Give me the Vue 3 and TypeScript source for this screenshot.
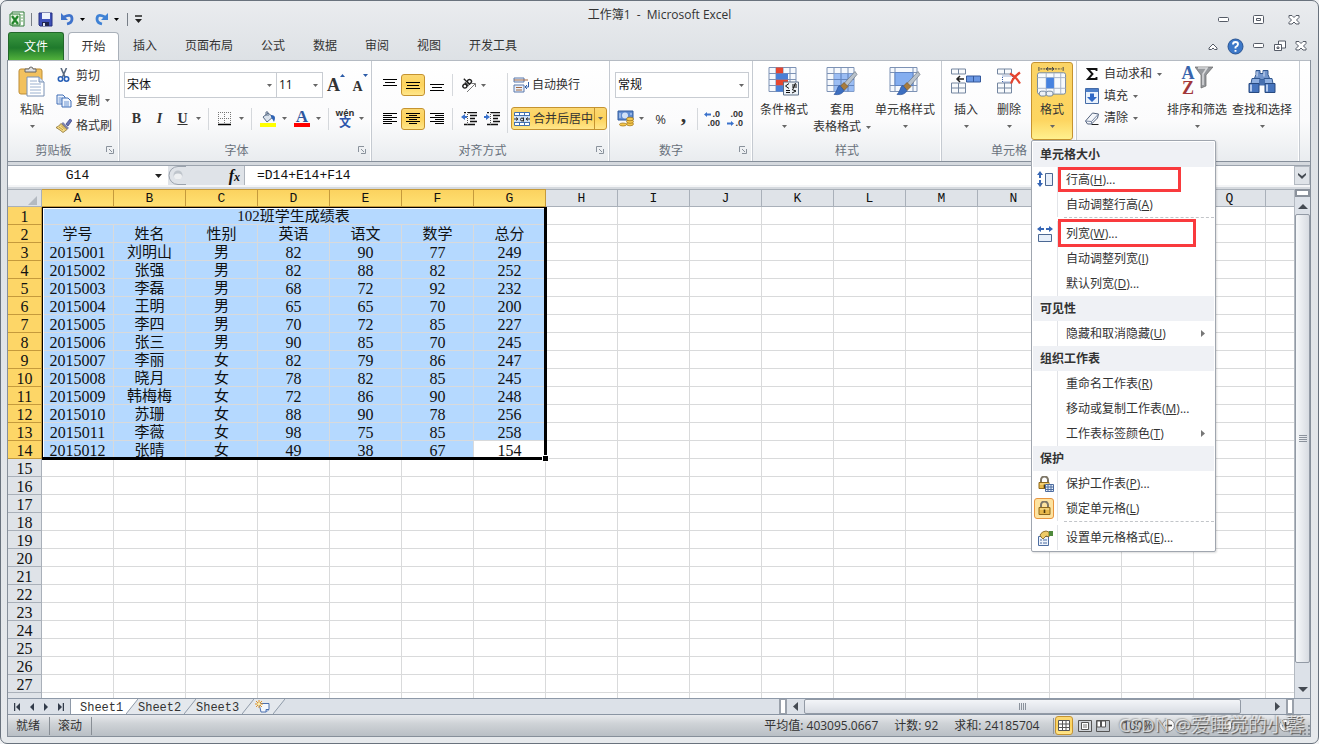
<script setup lang="ts">
import { h, type FunctionalComponent } from 'vue'

type Glyph = [width: number, height: number, body: string]

const sheetGrid = '<path d="M1 1h27v24h-27z" fill="#f6f9fd" stroke="#7d92b5"/><path d="M1 7h27M1 13h27M1 19h27M8 1v24M15 1v24M22 1v24" stroke="#7d92b5"/>'
const brush = '<path d="M29 5l-12 13 3 3 11-13z" fill="#b9c2cb" stroke="#6c7681" stroke-width=".7"/><path d="M18 16l4 4-4 4-4-4z" fill="#a87c3e" stroke="#74501c" stroke-width=".6"/><path d="M14 19q-2 0-3 4-1 3-3 5 8 1 10-4z" fill="#3d6fc0" stroke="#294f94" stroke-width=".6"/>'
const lock = '<path d="M4 7V4a3.5 3.5 0 0 1 7 0v3" fill="none" stroke="#7e7768" stroke-width="2"/><path d="M2 6.500h11v7h-11z" fill="#e8b94b" stroke="#8e681d"/><path d="M3 8h9" stroke="#fce7a4"/><path d="M7.500 8.500v3.500" stroke="#4d3910" stroke-width="1.600"/>'

const glyphs: Record<string, Glyph> = {
  excel: [16, 16, '<path d="M3 1h12v14H3z" fill="#fff" stroke="#2f7d36"/><path d="M1 3h10v11H1z" fill="#e1f1dc" stroke="#2f7d36"/><path d="M3 5l6 8M9 5l-6 8" stroke="#23862b" stroke-width="2.200"/><path d="M12 4h2M12 7h2M12 10h2" stroke="#70ad6a"/>'],
  save: [15, 15, '<path d="M1 1h13v13H2l-1-1z" fill="#3f51b8" stroke="#26317f"/><path d="M4 1h8v6H4z" fill="#eef2fb"/><path d="M4 10h7v4H4z" fill="#20264f"/><path d="M5 11h2v3H5z" fill="#dfe5f2"/>'],
  undo: [15, 14, '<path d="M4 5q8-4 8 2 0 4-5 5" fill="none" stroke="#3f73cb" stroke-width="2.800"/><path d="M1 1v7h7z" fill="#3f73cb"/>'],
  redo: [15, 14, '<path d="M11 5q-8-4-8 2 0 4 5 5" fill="none" stroke="#3f82d5" stroke-width="2.800"/><path d="M14 1v7H7z" fill="#3f82d5"/>'],
  qatMore: [9, 9, '<path d="M1 1h7" stroke="#222" stroke-width="1.400"/><path d="M1 4h7l-3.500 4z" fill="#222"/>'],
  arrow: [7, 4, '<path d="M0 0h7L3.500 4z" fill="#222"/>'],
  drop: [5, 3, '<path d="M0 0h5L2.500 3z" fill="#666"/>'],
  min: [12, 6, '<rect x=".5" y=".5" width="10" height="4" rx="1" fill="#fff" stroke="#555b66"/>'],
  max: [12, 10, '<rect x=".5" y=".5" width="10" height="8" rx="1" fill="#fff" stroke="#555b66"/><path d="M3.500 3.500h4v2h-4z" fill="none" stroke="#555b66"/>'],
  close: [12, 10, '<path d="M1 .5h3l2 2 2-2h3v2L8.500 5 11 7.500v1.500H8l-2-2-2 2H1V7.500L3.500 5 1 2.500z" fill="#fff" stroke="#555b66"/>'],
  restore: [12, 12, '<path d="M4.500 1h7v7h-7z" fill="#fff" stroke="#555b66"/><path d="M.5 4.500h7v6h-7z" fill="#fff" stroke="#555b66"/><path d="M3 7h2v1.500H3z" fill="none" stroke="#555b66"/>'],
  chevron: [10, 7, '<path d="M1 5l4-4 4 4v1.500H6.500L5 5 3.500 6.500H1z" fill="#fff" stroke="#555b66"/>'],
  help: [17, 17, '<circle cx="8.500" cy="8.500" r="7.500" fill="#3c78c8" stroke="#2a5593"/><path d="M6 6.500q0-2.500 2.500-2.500t2.500 2.200q0 1.500-2.500 3v1.300M8.500 12v1.700" fill="none" stroke="#fff" stroke-width="1.900"/>'],
  paste: [28, 31, '<rect x="1" y="3" width="23" height="25" rx="2" fill="#f2c15e" stroke="#bd8d36"/><path d="M7 6V3h4q0-2 2-2t2 2h3v3z" fill="#dedfe0" stroke="#666"/><path d="M9 11h12l5 5v14H9z" fill="#fff" stroke="#7890b4"/><path d="M21 11v5h5" fill="#d5e1f2" stroke="#7890b4"/><path d="M12 15h7M12 18h11M12 21h11M12 24h11M12 27h11" stroke="#9ab0cf"/>'],
  cut: [14, 15, '<path d="M4 0l4 9M9.500 0L5.500 9" stroke="#5b6b80" stroke-width="1.600"/><circle cx="3.500" cy="11" r="2.200" fill="none" stroke="#2860b7" stroke-width="1.600"/><circle cx="9.500" cy="11" r="2.200" fill="none" stroke="#2860b7" stroke-width="1.600"/>'],
  copy: [16, 14, '<path d="M1 1h6l2 2v7H1z" fill="#eef4fd" stroke="#3e6db5"/><path d="M2.500 4h4M2.500 6h4M2.500 8h3" stroke="#6c95d1"/><path d="M6 4h6l3 3v6H6z" fill="#eef4fd" stroke="#3e6db5"/><path d="M8 8h5M8 10h5M8 12h5" stroke="#6c95d1"/>'],
  painter: [16, 15, '<path d="M10 6l4-5 2 1.500-4 5.500z" fill="#6573b5" stroke="#3a417d" stroke-width=".7"/><path d="M7 4l6 6-2 1.500-6-5.500z" fill="#7d82ad"/><path d="M5 5.500l6 6-4 3q-2-2-7-5 3-1 5-4z" fill="#f3dc8a" stroke="#8c6d2b" stroke-width=".8"/><path d="M3 9l4 3M5 7.500l4 4" stroke="#c79b3b"/>'],
  up: [6, 4, '<path d="M0 3l2.500-3L5 3z" fill="#2b5ba8"/>'],
  down: [6, 4, '<path d="M0 0h5L2.500 3z" fill="#2b5ba8"/>'],
  borders: [14, 14, '<path d="M.5 0v12M6.500 0v12M12.500 0v12M0 .5h13M0 6.500h13" stroke="#777" stroke-dasharray="1 1"/><path d="M0 12.500h13" stroke="#000" stroke-width="1.600"/>'],
  fill: [16, 16, '<path d="M3 6l5-4 5 4-6 5z" fill="#dbe3ed" stroke="#596c87"/><path d="M6 5V1q2-1 2 1v3" fill="none" stroke="#596c87"/><path d="M11 4q6 0 3 7-1-2-3-5z" fill="#2f63b4"/><path d="M0 12h16v4H0z" fill="#ff0"/>'],
  fontColorBar: [16, 4, '<path d="M0 0h16v4H0z" fill="#f00"/>'],
  alMid: [14, 8, '<path d="M0 1.500h14M1 4.500h12M0 7.500h14" stroke="#000"/>'],
  alTop: [14, 8, '<path d="M0 .5h14M2 3.500h10M0 6.500h14" stroke="#000"/>'],
  left: [14, 12, '<path d="M0 .5h14M0 2.500h9M0 4.500h14M0 6.500h9M0 8.500h14M0 10.500h9" stroke="#000"/>'],
  center: [14, 12, '<path d="M0 .5h14M3 2.500h8M0 4.500h14M3 6.500h8M0 8.500h14M3 10.500h8" stroke="#000"/>'],
  right: [14, 12, '<path d="M0 .5h14M5 2.500h9M0 4.500h14M5 6.500h9M0 8.500h14M5 10.500h9" stroke="#000"/>'],
  orient: [16, 16, '<path d="M6 15l8-8M10.500 6.500H14.500V10" fill="none" stroke="#777"/><g fill="none" stroke="#222" stroke-width="1.400" transform="rotate(-45 6 7)"><circle cx="3" cy="7" r="2"/><path d="M5.500 4.500v5M7.500 1v8.500"/><circle cx="9.500" cy="7" r="2"/></g>'],
  outdent: [16, 14, '<path d="M7 .5h9M9 3.500h7M9 6.500h5M9 9.500h7M3 12.500h11M3 .5h2" stroke="#111" stroke-width="1.400"/><path d="M6.500 0v14" stroke="#555" stroke-dasharray="1 1"/><path d="M4 2L0 5l4 3V6h2V4H4z" fill="#3a72cc"/>'],
  indent: [16, 14, '<path d="M7 .5h9M9 3.500h7M9 6.500h5M9 9.500h7M3 12.500h11M3 .5h2" stroke="#111" stroke-width="1.400"/><path d="M6.500 0v14" stroke="#555" stroke-dasharray="1 1"/><path d="M2 2l4 3-4 3V6H0V4h2z" fill="#3a72cc"/>'],
  wrap: [17, 16, '<path d="M1 1h10v4H1zM1 8h10v7H1z" fill="#e9f0fa" stroke="#5a79ab"/><path d="M1 3h14M3 10.500h6M3 13h6" stroke="#a3673f"/><path d="M15.500 5v5h-3M14 8l-2 2 2 2" fill="none" stroke="#2e5da6"/>'],
  merge: [16, 14, '<path d="M.5.5h15v13H.5z" fill="#fff" stroke="#4270b0"/><path d="M0 3.500h16M0 10.500h16M5.500 0v3M10.500 0v3M5.500 11v3M10.500 11v3" stroke="#4270b0"/><path d="M0 4h16v6H0z" fill="#cfe0f6"/><path d="M0 7h4M12 7h4M2 5.500l2 1.500-2 1.500M14 5.500L12 7l2 1.500" fill="none" stroke="#333"/><circle cx="8" cy="7.500" r="1.500" fill="none" stroke="#222"/><path d="M9.500 5.500v4" stroke="#222"/>'],
  money: [18, 17, '<path d="M1 1h15v9H1z" fill="#5f8bd0" stroke="#315a9c"/><circle cx="8" cy="5.500" r="3" fill="#cfe0f7"/><path d="M3 3v5M14 3v2" stroke="#cfe0f7"/><g fill="#f5c84d" stroke="#9c7015" stroke-width=".7"><ellipse cx="13" cy="14" rx="3.500" ry="1.800"/><ellipse cx="13" cy="11.500" rx="3.500" ry="1.800"/><ellipse cx="13" cy="9" rx="3.500" ry="1.800"/><ellipse cx="6" cy="14.500" rx="3.500" ry="1.500"/></g>'],
  blueLeft: [7, 5, '<path d="M3 0L0 2.500 3 5V3.500h4v-2H3z" fill="#3a72cc"/>'],
  blueRight: [7, 5, '<path d="M4 0l3 2.500L4 5V3.500H0v-2h4z" fill="#3a72cc"/>'],
  launcher: [8, 8, '<path d="M.5 6V.5H6" fill="none" stroke="#8a929c"/><path d="M3 3l3 3M7.500 3v4.500H3" fill="none" stroke="#8a929c"/>'],
  cond: [32, 30, sheetGrid + '<path d="M8 1h7v6H8zM8 13h12v6H8z" fill="#e5452f"/><path d="M8 7h12v6H8zM8 19h7v6H8z" fill="#4a7fd6"/><path d="M15.500 15.500h15v13h-15z" fill="#eef3f8" stroke="#5d6f87"/><path d="M21 17l-3.500 2.500 3.500 2.500M18 24h4M18 26h4M24 18.500h5M24 20.500h5M27.500 16.500l-2.500 6M24 23l4 1.500-4 2" fill="none" stroke="#111"/>'],
  tableStyle: [32, 30, sheetGrid + '<path d="M8 7h20v18H8z" fill="#84aef0" opacity=".8"/><path d="M8 13h20M8 19h20M15 7v18M22 7v18" stroke="#6486c0"/>' + brush],
  cellStyle: [32, 30, '<path d="M1 1h27v24H1z" fill="#f6f9fd" stroke="#7d92b5"/><path d="M1 6h27M1 19h27M6 1v24M24 1v24" stroke="#7d92b5"/><path d="M6 6h18v13H6z" fill="#84aef0" stroke="#5f84c4"/>' + brush],
  insert: [32, 28, '<path d="M1.500 1.500h14v5h-14zM1.500 15.500h14v10h-14zM8.500 1.500v5M8.500 15.500v10M1.500 20.500h14" fill="#f8fafc" stroke="#7486a0"/><path d="M16.500 8.500h14v6h-14zM23.500 8.500v6" fill="#6a97e3" stroke="#34599c"/><path d="M14 11.500H7M10 8.500l-3 3 3 3" fill="none" stroke="#222" stroke-width="1.500"/>'],
  remove: [26, 28, '<path d="M1.500 1.500h14v5h-14zM1.500 15.500h14v10h-14zM8.500 1.500v5M8.500 15.500v10M1.500 20.500h14" fill="#f8fafc" stroke="#7486a0"/><path d="M6.500 8.500h10v6h-10z" fill="#fff" stroke="#3d62a8" stroke-dasharray="1 1"/><path d="M14 6q6 3 10 10M24 5q-7 5-9 11" fill="none" stroke="#e5452f" stroke-width="2.200"/>'],
  format: [32, 32, '<path d="M2.500 1v4M27.500 1v4" stroke="#444"/><path d="M4 3h22" stroke="#444" stroke-dasharray="2 1"/><path d="M10 3h8M12 1l-2 2 2 2M16 1l2 2-2 2" fill="none" stroke="#444"/><rect x="1" y="7" width="29" height="22" rx="2" fill="#f7fafd" stroke="#74879f"/><path d="M1 12h29M1 23h29M10 7v22M18 7v22M25 7v22" stroke="#a6b3c6"/><path d="M10 12h8v11h-8z" fill="#4682df"/><rect x="3" y="26" width="7" height="5" rx="2" fill="#eef2f7" stroke="#74879f"/><rect x="10" y="26" width="7" height="5" rx="2" fill="#eef2f7" stroke="#74879f"/>'],
  sigma: [11, 12, '<path d="M10 3V1H1.500L6 6l-4.500 5H10V9" fill="none" stroke="#111" stroke-width="1.900"/>'],
  fillDown: [14, 16, '<path d="M.5.5h13v15H.5z" fill="#eaf2fc" stroke="#456ca8"/><path d="M1 1h12v3H1z" fill="#4d7fc9"/><path d="M5 5.500h4V9h3l-5 5-5-5h3z" fill="#2f68c6"/>'],
  eraser: [15, 13, '<path d="M1 9l7-8 6 1-1 4-6 6H3z" fill="#f4f6fa" stroke="#52617b"/><path d="M1 9l6 .500 6.500-7M7 9.500V12" fill="none" stroke="#7888a3"/><path d="M7 12.500h7" stroke="#222"/>'],
  funnel: [18, 23, '<path d="M0 1h18L11 9v11l-5 2V9z" fill="#96999d" stroke="#666" stroke-width=".7"/><path d="M3 2h9L8 8v11" fill="none" stroke="#d9dadc" stroke-width="1.500"/>'],
  binocular: [28, 26, '<path d="M8 2h4v3h3V2h5v4l2 5H6l2-5z" fill="#7295cb" stroke="#31578f"/><path d="M4 10h8v5H3zM16 10h8l1 5h-9z" fill="#8eafe0" stroke="#31578f"/><path d="M11 11h6v6h-6z" fill="#4770b0"/><path d="M1 15h10v9H1zM17 15h10v9H17z" fill="#4674bd" stroke="#284a80"/><path d="M3 16v7M19 16v7" stroke="#b6cbed" stroke-width="2"/><path d="M9 3v5M16 3v5" stroke="#d4e1f5"/>'],
  rowHeight: [17, 17, '<path d="M3 0l3 4H4v3H2V4H0zM3 16l3-4H4V9H2v3H0z" fill="#3666b5"/><path d="M8.500 2.500h7v12h-7z" fill="#e7effa" stroke="#4b6893"/>'],
  colWidth: [16, 16, '<path d="M0 3l4-3v2h3v2H4v2zM16 3l-4-3v2H9v2h3v2z" fill="#3666b5"/><path d="M1.500 8.500h13v7h-13z" fill="#e7effa" stroke="#4b6893"/>'],
  protect: [17, 16, lock.replace('M2 6.500h11v7h-11z', 'M2 6.500h10v6h-10z') + '<path d="M8.500 8.500h8v7h-8z" fill="#e9f0fa" stroke="#4d6da0"/><path d="M8 11h9M8 13.500h9M11 8v8M14 8v8" stroke="#4d6da0"/>'],
  lock: [16, 15, lock],
  props: [17, 16, '<path d="M1.500 6.500h10v9h-10z" fill="#eef3fb" stroke="#4d6da0"/><path d="M3 10h2M6 10h4M3 13h2M6 13h4" stroke="#4d6da0"/><path d="M3 5q2-4 6-4l3 1v5L9 6 6 9 4 7z" fill="#eecb67" stroke="#7a5a1a" stroke-width=".8"/><path d="M12 1h4v5h-4z" fill="#4f8a3c"/>'],
  sub: [4, 7, '<path d="M0 0l4 3.500L0 7z" fill="#777"/>'],
  knob: [18, 19, '<path d="M18 .5h-8a9 9 0 0 0 0 18h8" fill="#dfe3e8" stroke="#9ba3ad"/><circle cx="10" cy="9" r="4.500" fill="#bfc5cc"/><ellipse cx="10" cy="10.500" rx="4" ry="3" fill="#eef0f2"/>'],
  corner: [9, 9, '<path d="M9 0v9H0z" fill="#b4bac1"/>'],
  scrollUp: [10, 5, '<path d="M5 0l5 5H0z" fill="#444a52"/>'],
  scrollDown: [10, 5, '<path d="M5 5l5-5H0z" fill="#444a52"/>'],
  scrollLeft: [5, 9, '<path d="M0 4.500L5 0v9z" fill="#444a52"/>'],
  scrollRight: [5, 9, '<path d="M5 4.500L0 0v9z" fill="#444a52"/>'],
  expand: [8, 6, '<path d="M0 0l4 3 4-3v2L4 6 0 2z" fill="#444a52"/>'],
  first: [7, 8, '<path d="M.5 0v8" stroke="#333c4a" stroke-width="1.500"/><path d="M2 4l4-4v8z" fill="#333c4a"/>'],
  prev: [5, 8, '<path d="M0 4l4-4v8z" fill="#333c4a"/>'],
  next: [5, 8, '<path d="M5 4L1 0v8z" fill="#333c4a"/>'],
  last: [7, 8, '<path d="M6.500 0v8" stroke="#333c4a" stroke-width="1.500"/><path d="M5 4L1 0v8z" fill="#333c4a"/>'],
  newSheet: [16, 13, '<path d="M4 3.500h10v6l-3 2.500H6z" fill="#f3f7fd" stroke="#4b6fae"/><path d="M14 9.500h-3V12" fill="#b4caee" stroke="#4b6fae"/><path d="M4 0v8M0 4h8M1 1l6 6M7 1L1 7" stroke="#df9226"/><circle cx="4" cy="4" r="1.500" fill="#fff1a8"/>'],
  vNormal: [12, 11, '<path d="M.5.5h11v10H.5zM0 4h12M0 7.500h12M4.500 0v11M8 0v11" fill="#fff" stroke="#555"/>'],
  vLayout: [14, 12, '<path d="M.5.5h13v11H.5z" fill="#d2d6da" stroke="#555"/><path d="M3.500 2.500h7v7h-7z" fill="#fff" stroke="#555"/><path d="M5 5h4M5 7h4" stroke="#777"/>'],
  vBreak: [14, 12, '<path d="M.5.5h13v11H.5z" fill="#c2c7cc" stroke="#555"/><path d="M1 1h3.500v6H1zM5.500 1h4v6h-4z" fill="#fff" stroke="#555"/>'],
  minus: [13, 13, '<circle cx="6.500" cy="6.500" r="6" fill="#fafafa" stroke="#888"/><path d="M3 6.500h7" stroke="#444" stroke-width="1.600"/>'],
  plus: [13, 13, '<circle cx="6.500" cy="6.500" r="6" fill="#fafafa" stroke="#888"/><path d="M3 6.500h7M6.500 3v7" stroke="#444" stroke-width="1.600"/>'],
  grip: [10, 10, '<path d="M8 0h2v2H8zM4 4h2v2H4zM8 4h2v2H8zM0 8h2v2H0zM4 8h2v2H4zM8 8h2v2H8z" fill="#8b929a"/>'],
}

const Icon: FunctionalComponent<{ name: string }> = ({ name }) => {
  const [width, height, body] = glyphs[name]
  return h('svg', { width, height, viewBox: `0 0 ${width} ${height}`, innerHTML: body, 'aria-hidden': 'true' })
}
Icon.props = ['name']

const tabs = ['插入', '页面布局', '公式', '数据', '审阅', '视图', '开发工具']
const columns = [...'ABCDEFGHIJKLMNOPQR']
const rowCount = 28
const records: string[][] = [
  ['学号', '姓名', '性别', '英语', '语文', '数学', '总分'],
  ['2015001', '刘明山', '男', '82', '90', '77', '249'],
  ['2015002', '张强', '男', '82', '88', '82', '252'],
  ['2015003', '李磊', '男', '68', '72', '92', '232'],
  ['2015004', '王明', '男', '65', '65', '70', '200'],
  ['2015005', '李四', '男', '70', '72', '85', '227'],
  ['2015006', '张三', '男', '90', '85', '70', '245'],
  ['2015007', '李丽', '女', '82', '79', '86', '247'],
  ['2015008', '晓月', '女', '78', '82', '85', '245'],
  ['2015009', '韩梅梅', '女', '72', '86', '90', '248'],
  ['2015010', '苏珊', '女', '88', '90', '78', '256'],
  ['2015011', '李薇', '女', '98', '75', '85', '258'],
  ['2015012', '张晴', '女', '49', '38', '67', '154'],
]
const cell = (row: number, col: number) => records[row - 2]?.[col] ?? ''
const isNumber = (value: string) => /^\d+$/.test(value)

interface Entry {
  kind: 'head' | 'item' | 'line'
  text?: string
  key?: string
  tail?: string
  icon?: string
  sub?: boolean
  mark?: string
  on?: boolean
}
const menu: Entry[] = [
  { kind: 'head', text: '单元格大小' },
  { kind: 'item', text: '行高', key: 'H', tail: '...', icon: 'rowHeight', mark: 'mark-row' },
  { kind: 'item', text: '自动调整行高', key: 'A' },
  { kind: 'line' },
  { kind: 'item', text: '列宽', key: 'W', tail: '...', icon: 'colWidth', mark: 'mark-col' },
  { kind: 'item', text: '自动调整列宽', key: 'I' },
  { kind: 'item', text: '默认列宽', key: 'D', tail: '...' },
  { kind: 'head', text: '可见性' },
  { kind: 'item', text: '隐藏和取消隐藏', key: 'U', sub: true },
  { kind: 'head', text: '组织工作表' },
  { kind: 'item', text: '重命名工作表', key: 'R' },
  { kind: 'item', text: '移动或复制工作表', key: 'M', tail: '...' },
  { kind: 'item', text: '工作表标签颜色', key: 'T', sub: true },
  { kind: 'head', text: '保护' },
  { kind: 'item', text: '保护工作表', key: 'P', tail: '...', icon: 'protect' },
  { kind: 'item', text: '锁定单元格', key: 'L', icon: 'lock', on: true },
  { kind: 'line' },
  { kind: 'item', text: '设置单元格格式', key: 'E', tail: '...', icon: 'props' },
]
</script>

<template>
  <div class="window">
    <header class="titlebar">
      <div class="quick">
        <Icon name="excel" /><i class="bar"></i>
        <button aria-label="保存"><Icon name="save" /></button>
        <button class="pair" aria-label="撤消"><Icon name="undo" /><Icon name="drop" class="dark" /></button>
        <button class="pair" aria-label="恢复"><Icon name="redo" /><Icon name="drop" class="dark" /></button>
        <i class="bar last"></i>
        <button aria-label="自定义快速访问工具栏"><Icon name="qatMore" /></button>
      </div>
      <h1>工作簿1&nbsp; -&nbsp; Microsoft Excel</h1>
      <div class="controls">
        <button aria-label="最小化"><Icon name="min" /></button>
        <button aria-label="最大化"><Icon name="max" /></button>
        <button aria-label="关闭"><Icon name="close" /></button>
      </div>
    </header>

    <nav class="tabs">
      <button class="file">文件</button>
      <button class="current">开始</button>
      <button v-for="t in tabs" :key="t" class="tab">{{ t }}</button>
      <div class="book">
        <button aria-label="功能区最小化"><Icon name="chevron" /></button>
        <button aria-label="帮助"><Icon name="help" /></button>
        <button aria-label="最小化工作簿"><Icon name="min" /></button>
        <button aria-label="还原工作簿"><Icon name="restore" /></button>
        <button aria-label="关闭工作簿"><Icon name="close" /></button>
      </div>
    </nav>

    <main class="body">
      <section class="ribbon">
        <div class="group g-clip">
          <div class="tools">
            <button class="big w-paste"><Icon name="paste" class="pic" /><span>粘贴</span><Icon name="drop" class="under" /></button>
            <div class="stack">
              <button class="small"><Icon name="cut" class="ico" />剪切</button>
              <button class="small"><Icon name="copy" class="ico" />复制<Icon name="drop" /></button>
              <button class="small"><Icon name="painter" class="ico" />格式刷</button>
            </div>
          </div>
          <footer>剪贴板<Icon name="launcher" class="launch" /></footer>
        </div>

        <div class="group g-font">
          <div class="rows">
            <div class="row">
              <label class="combo c-font"><select aria-label="字体"><option>宋体</option></select><Icon name="drop" /></label>
              <label class="combo c-size"><select aria-label="字号"><option>11</option></select><Icon name="drop" /></label>
              <button class="tool grow" aria-label="增大字号"><b class="serif">A</b><Icon name="up" /></button>
              <button class="tool grow shrink" aria-label="减小字号"><b class="serif">A</b><Icon name="down" /></button>
            </div>
            <div class="row">
              <button class="tool serif"><b>B</b></button>
              <button class="tool serif"><b><i>I</i></b></button>
              <button class="tool serif"><b><u>U</u></b></button>
              <button class="arrow" aria-label="下划线"><Icon name="drop" /></button><i class="sep"></i>
              <button class="tool" aria-label="边框"><Icon name="borders" /></button>
              <button class="arrow" aria-label="边框选项"><Icon name="drop" /></button><i class="sep"></i>
              <button class="tool" aria-label="填充颜色"><Icon name="fill" /></button>
              <button class="arrow" aria-label="填充颜色选项"><Icon name="drop" /></button>
              <button class="tool color" aria-label="字体颜色"><b class="serif">A</b><Icon name="fontColorBar" /></button>
              <button class="arrow" aria-label="字体颜色选项"><Icon name="drop" /></button><i class="sep"></i>
              <button class="tool pinyin"><span>wén</span><span class="wen">文</span></button>
              <button class="arrow" aria-label="拼音选项"><Icon name="drop" /></button>
            </div>
          </div>
          <footer>字体<Icon name="launcher" class="launch" /></footer>
        </div>

        <div class="group g-align">
          <div class="split">
            <div class="rows">
              <div class="row">
                <button class="tool up3" aria-label="顶端对齐"><Icon name="alTop" /></button>
                <button class="tool on" aria-label="垂直居中"><Icon name="alMid" /></button>
                <button class="tool down3" aria-label="底端对齐"><Icon name="alTop" /></button><i class="sep"></i>
                <button class="tool" aria-label="方向"><Icon name="orient" /></button>
                <button class="arrow tight-arrow" aria-label="方向选项"><Icon name="drop" /></button>
              </div>
              <div class="row">
                <button class="tool" aria-label="左对齐"><Icon name="left" /></button>
                <button class="tool on" aria-label="居中"><Icon name="center" /></button>
                <button class="tool" aria-label="右对齐"><Icon name="right" /></button><i class="sep"></i>
                <button class="tool" aria-label="减少缩进"><Icon name="outdent" /></button>
                <button class="tool" aria-label="增加缩进"><Icon name="indent" /></button>
              </div>
            </div>
            <i class="sep tall"></i>
            <div class="rows merge-col">
              <div class="row"><button class="wrapper"><Icon name="wrap" />自动换行</button></div>
              <div class="row">
                <div class="merge"><button><Icon name="merge" />合并后居中</button><button class="more" aria-label="合并选项"><Icon name="drop" /></button></div>
              </div>
            </div>
          </div>
          <footer>对齐方式<Icon name="launcher" class="launch" /></footer>
        </div>

        <div class="group g-num">
          <div class="rows">
            <div class="row"><label class="combo c-num"><select aria-label="数字格式"><option>常规</option></select><Icon name="drop" /></label></div>
            <div class="row">
              <button class="tool" aria-label="会计数字格式"><Icon name="money" /></button>
              <button class="arrow" aria-label="会计格式选项"><Icon name="drop" /></button>
              <button class="tool pct">%</button>
              <button class="tool comma serif">,</button><i class="sep"></i>
              <button class="tool dec"><span><Icon name="blueLeft" />.0</span><span>.00</span></button>
              <button class="tool dec"><span>.00</span><span><Icon name="blueRight" />.0</span></button>
            </div>
          </div>
          <footer>数字<Icon name="launcher" class="launch" /></footer>
        </div>

        <div class="group g-style">
          <div class="tools">
            <button class="big w-cond"><Icon name="cond" class="pic" /><span>条件格式</span><Icon name="drop" class="under" /></button>
            <button class="big w-table"><Icon name="tableStyle" class="pic" /><span>套用</span><span class="second">表格格式<Icon name="drop" /></span></button>
            <button class="big w-cell"><Icon name="cellStyle" class="pic" /><span>单元格样式</span><Icon name="drop" class="under" /></button>
          </div>
          <footer>样式</footer>
        </div>

        <div class="group g-cells">
          <div class="tools">
            <button class="big w-ins"><Icon name="insert" class="pic" /><span>插入</span><Icon name="drop" class="under" /></button>
            <button class="big w-del"><Icon name="remove" class="pic" /><span>删除</span><Icon name="drop" class="under" /></button>
            <div class="anchor">
              <button class="big open"><Icon name="format" class="pic" /><span>格式</span><Icon name="drop" class="under" /></button>
              <div class="menu" role="menu">
                <template v-for="(m, i) in menu" :key="i">
                  <h2 v-if="m.kind === 'head'">{{ m.text }}</h2>
                  <hr v-else-if="m.kind === 'line'" />
                  <button v-else role="menuitem">
                    <span class="slot" :class="{ checked: m.on }"><Icon v-if="m.icon" :name="m.icon" /></span>
                    <span class="words">{{ m.text }}(<u>{{ m.key }}</u>){{ m.tail }}</span>
                    <Icon v-if="m.sub" name="sub" class="sub" />
                    <span v-if="m.mark" class="mark" :class="m.mark"></span>
                  </button>
                </template>
              </div>
            </div>
          </div>
          <footer>单元格</footer>
        </div>

        <div class="group g-edit">
          <div class="tools">
            <div class="stack tight">
              <button class="small"><Icon name="sigma" class="ico" />自动求和<Icon name="drop" /></button>
              <button class="small"><Icon name="fillDown" class="ico" />填充<Icon name="drop" /></button>
              <button class="small"><Icon name="eraser" class="ico" />清除<Icon name="drop" /></button>
            </div>
            <button class="big w-sort">
              <span class="pic az serif"><span><b class="a">A</b><b class="z">Z</b></span><Icon name="funnel" /></span>
              <span>排序和筛选</span><Icon name="drop" class="under" />
            </button>
            <button class="big w-find"><Icon name="binocular" class="pic" /><span>查找和选择</span><Icon name="drop" class="under" /></button>
          </div>
        </div>
      </section>

      <section class="formula">
        <div class="namebox"><input aria-label="名称框" value="G14" /><Icon name="arrow" /></div>
        <Icon name="knob" />
        <button class="fx" aria-label="插入函数"><b><i>f</i><small>x</small></b></button>
        <input class="expr" aria-label="编辑栏" value="=D14+E14+F14" />
        <button class="expand" aria-label="展开编辑栏"><Icon name="expand" /></button>
      </section>

      <section class="sheet">
        <div class="grid">
          <table>
            <colgroup><col class="c-head" /><col v-for="c in columns" :key="c" class="c-col" /></colgroup>
            <thead>
              <tr>
                <th class="all"><Icon name="corner" /></th>
                <th v-for="(c, i) in columns" :key="c" :class="{ hot: i < 7 }">{{ c }}</th>
              </tr>
            </thead>
            <tbody>
              <tr v-for="r in rowCount" :key="r">
                <th :class="{ hot: r < 15 }">{{ r < rowCount ? r : '' }}</th>
                <template v-if="r === 1">
                  <td colspan="7" class="sel">102班学生成绩表</td>
                  <td v-for="n in 11" :key="n"></td>
                </template>
                <template v-else>
                  <td v-for="(c, i) in columns" :key="c" :class="{ sel: r < 15 && i < 7, active: r === 14 && i === 6, num: isNumber(cell(r, i)) }">{{ cell(r, i) }}</td>
                </template>
              </tr>
            </tbody>
          </table>
          <div class="outline"><span></span></div>
        </div>
        <div class="vscroll">
          <i class="splitter"></i>
          <button aria-label="向上滚动"><Icon name="scrollUp" /></button>
          <div class="thumb"><i></i></div>
          <button class="end" aria-label="向下滚动"><Icon name="scrollDown" /></button>
        </div>
      </section>

      <section class="sheetbar">
        <div class="nav">
          <button aria-label="第一张"><Icon name="first" /></button>
          <button aria-label="上一张"><Icon name="prev" /></button>
          <button aria-label="下一张"><Icon name="next" /></button>
          <button aria-label="最后一张"><Icon name="last" /></button>
        </div>
        <button class="leaf front">Sheet1</button>
        <svg class="slash" width="12" height="15" aria-hidden="true"><path d="M0 0h12L0 15z" fill="#fff" /><path d="M12 0L0 15" stroke="#8e99a8" /></svg>
        <button class="leaf">Sheet2</button>
        <svg class="slash" width="12" height="15" aria-hidden="true"><path d="M12 0L0 15" stroke="#8e99a8" /></svg>
        <button class="leaf">Sheet3</button>
        <svg class="slash" width="12" height="15" aria-hidden="true"><path d="M12 0L0 15" stroke="#8e99a8" /></svg>
        <button class="leaf fresh" aria-label="插入工作表"><Icon name="newSheet" /></button>
        <svg width="12" height="15" aria-hidden="true"><path d="M0 0h12L0 15z" fill="#e4e8ed" /><path d="M12 0L0 15" stroke="#8e99a8" /></svg>
        <div class="hscroll">
          <i class="hsplit"></i>
          <button aria-label="向左滚动"><Icon name="scrollLeft" /></button>
          <div class="track"><div class="thumb"><i></i></div></div>
          <button aria-label="向右滚动"><Icon name="scrollRight" /></button>
          <i class="hsplit"></i>
        </div>
      </section>

      <footer class="status">
        <span class="state">就绪</span><span class="state">滚动</span>
        <div class="sums"><span>平均值: 403095.0667</span><span>计数: 92</span><span>求和: 24185704</span></div>
        <div class="views">
          <button class="on" aria-label="普通"><Icon name="vNormal" /></button>
          <button aria-label="页面布局视图"><Icon name="vLayout" /></button>
          <button aria-label="分页预览"><Icon name="vBreak" /></button>
        </div>
        <button class="zoom">100%</button>
        <button class="round" aria-label="缩小"><Icon name="minus" /></button>
        <input type="range" min="0" max="100" value="50" aria-label="显示比例" />
        <button class="round" aria-label="放大"><Icon name="plus" /></button>
        <Icon name="grip" class="grip" />
        <div class="credit">CSDN @爱睡觉的小馨</div>
      </footer>
    </main>
  </div>
</template>

<style>
body { margin: 0; background: #f2f3f5; }
</style>

<style scoped>
* { box-sizing: border-box; }
.window { height: 100vh; min-height: 600px; display: flex; flex-direction: column; border: 1px solid #69727d; border-radius: 7px; background: linear-gradient(#eaecef, #dde1e5 60px, #e6e9ec); padding: 0 7px 6px; overflow: hidden; font: 12px/16px "Open Sans", "Noto Sans CJK SC", sans-serif; color: #333; }
button { border: 0; padding: 0; margin: 0; background: none; font: inherit; color: inherit; display: flex; align-items: center; white-space: nowrap; }
svg { display: block; flex: none; }
input, select { font: inherit; color: inherit; margin: 0; }
.serif { font-family: "Liberation Serif", serif; }

.titlebar { height: 31px; flex: none; display: grid; grid-template-columns: 1fr auto 1fr; align-items: center; }
h1 { margin: 0; font-size: 12px; font-weight: 400; line-height: 28px; height: 31px; }
.quick { display: flex; align-items: center; gap: 6px; padding: 5px 0 0 1px; }
.quick .pair { gap: 5px; margin: 0 2px 0 1px; }
.dark { filter: brightness(0); }
.bar { width: 1px; height: 13px; background: #777e87; }
.controls { display: flex; justify-content: flex-end; align-items: center; gap: 23px; padding: 6px 11px 0 0; }

.tabs { height: 28px; flex: none; display: flex; align-items: stretch; }
.tabs .file { width: 56px; justify-content: center; color: #fff; border: 1px solid #22672a; border-bottom: 0; border-radius: 3px 3px 0 0; background: linear-gradient(#3d9a42, #1f7a2c 55%, #52b13c); }
.tabs .current { width: 51px; margin-left: 4px; justify-content: center; border: 1px solid #a9b0b9; border-bottom: 0; border-radius: 4px 4px 0 0; background: #fff; }
.tab { padding: 0 14px; }
.book { margin-left: auto; display: flex; align-items: center; gap: 9px; padding-right: 4px; }

.body { flex: 1; min-height: 0; display: flex; flex-direction: column; border: 1px solid #868f9a; border-width: 0 1px 1px 0; background: #d5d9de; box-shadow: -1px 0 #868f9a; position: relative; }
.ribbon { flex: none; display: flex; height: 102px; background: linear-gradient(#fff, #fbfbfc 60%, #e9ecef); border-top: 1px solid #b5bbc3; border-bottom: 1px solid #868f9a; }
.group { position: relative; display: flex; flex-direction: column; border-right: 1px solid #c5cad1; box-shadow: inset -1px 0 #fff; flex: none; }
.group > footer { margin-top: auto; height: 19px; text-align: center; color: #69717c; line-height: 18px; }
.launch { position: absolute; right: 5px; bottom: 7px; }
.g-clip { width: 112px; } .g-clip footer { padding-right: 20px; }
.g-font { width: 252px; } .g-font footer { padding-right: 18px; }
.g-align { width: 238px; } .g-align footer { padding-right: 16px; }
.g-num { width: 143px; } .g-num footer { padding-right: 20px; }
.g-style { width: 189px; }
.g-cells { width: 135px; }
.g-edit { width: 223px; }
.tools { display: flex; height: 80px; padding-top: 2px; }
.big { flex-direction: column; height: 78px; justify-content: flex-start; }
.big .pic { height: 31px; margin: 3px 0 4px; }
.big > span { line-height: 18px; }
.big .under { margin-top: 6px; }
.big .second { display: flex; align-items: center; gap: 5px; line-height: 16px; }
.w-paste { width: 48px; }
.w-cond { width: 62px; } .w-table { width: 54px; } .w-cell { width: 72px; }
.w-ins { width: 48px; } .w-del { width: 38px; }
.w-sort { width: 64px; margin-left: 2px; } .w-find { width: 66px; }
.stack { display: flex; flex-direction: column; }
.small { height: 25px; gap: 5px; }
.small .ico { width: 16px; margin-right: -1px; }
.tight { width: 86px; padding: 0 0 0 7px; }
.tight .small { height: 22px; }
.az { display: flex; }
.az > span { display: flex; flex-direction: column; }
.az b { font-size: 18px; line-height: 15px; }
.az .a { color: #3865ad; } .az .z { color: #a2383a; }

.rows { padding: 11px 0 0 4px; display: flex; flex-direction: column; gap: 9px; }
.row { display: flex; align-items: center; height: 26px; }
.row + .row { height: 23px; }
.tool { width: 24px; height: 22px; justify-content: center; }
.tool.serif { font-size: 14px; width: 23px; }
.arrow { width: 16px; height: 22px; justify-content: flex-start; padding-left: 4px; }
.g-font .arrow { padding-left: 2px; width: 10px; }
.g-align .tight-arrow { padding-left: 1px; }
.sep { width: 1px; height: 22px; margin: 0 4px; background: #d5d8dc; }
.combo { position: relative; display: flex; align-items: center; border: 1px solid #c8ccd2; background: #fff; height: 26px; }
.combo select { appearance: none; border: 0; background: none; width: 100%; height: 24px; padding: 0 2px; color: #111; }
.combo svg { position: absolute; right: 4px; pointer-events: none; }
.c-font { width: 153px; } .c-size { width: 47px; margin-left: -1px; } .c-num { width: 134px; margin-left: 1px; }
.tool.grow { margin-left: 3px; align-items: flex-start; font-size: 18px; line-height: 22px; width: 21px; }
.tool.shrink { font-size: 14px; line-height: 25px; }
.g-font .row:last-child { padding-left: 1px; }
.color { flex-direction: column; color: #2f579f; }
.color b { font-size: 17px; line-height: 13px; }
.pinyin { flex-direction: column; font-size: 9px; line-height: 9px; font-weight: 700; }
.wen { color: #2d55ab; font-size: 12px; line-height: 12px; }
.split { display: flex; }
.g-align .row .tool { width: 23px; }
.g-align .rows { padding-left: 6px; }
.g-align .row .tool.on, .merge, .views .on { border: 1px solid #c59330; border-radius: 3px; background: linear-gradient(#fbd873, #fdd35c 50%, #ffe68a); }
.g-align .row .tool.on { width: 24px; }
.up3 { padding-bottom: 5px; } .down3 { padding-top: 6px; }
.sep.tall { height: 60px; margin: 12px 3px 0 4px; }
.g-align .merge-col { padding-left: 0; }
.wrapper { gap: 2px; padding-left: 2px; }
.merge { display: flex; height: 23px; width: 96px; }
.merge button { gap: 3px; padding-left: 2px; }
.merge .more { border-left: 1px solid #c59330; padding: 0 3px; margin-left: auto; }
.g-num .arrow { width: 12px; padding-left: 2px; }
.g-num .tool { width: 23px; }
.g-num .sep { margin: 0 2px; }
.pct { font-size: 13px; }
.tool.comma { font-size: 22px; font-weight: 700; padding-bottom: 8px; }
.dec { flex-direction: column; font: 700 9px/9px "Liberation Sans", sans-serif; }
.dec span { display: flex; align-items: center; align-self: flex-end; gap: 1px; }
.g-num .dec { padding-right: 3px; }

.anchor { position: relative; margin-left: 3px; margin-top: -1px; }
.open { width: 42px; height: 78px; border: 1px solid #c59330; border-radius: 3px; background: linear-gradient(#fbd466, #fdd560 75%, #fff08e); }
.menu { position: absolute; z-index: 5; left: 0; top: 78px; width: 185px; padding: 1px; border: 1px solid #a0a6af; border-radius: 2px; background: #fff; box-shadow: 1px 1px 2px #0002; }
.menu h2 { margin: 0; height: 25px; padding-left: 7px; font-size: 12px; line-height: 25px; font-weight: 700; background: #eff1f5; }
.menu button { position: relative; width: 100%; height: 25px; }
.menu hr { height: 4px; margin: 0 0 0 31px; border: 0; border-top: 1px dashed #c2c5c9; }
.slot { width: 25px; height: 25px; border-right: 1px solid #e2e4e8; display: flex; align-items: center; justify-content: center; }
.checked { position: relative; }
.checked::before { content: ""; position: absolute; inset: 2px 3px 2px 1px; border: 1px solid #e8953f; border-radius: 3px; background: #fde3a0; }
.checked svg { position: relative; }
.words { padding-left: 8px; }
.sub { margin-left: auto; margin-right: 9px; }
.mark { position: absolute; left: 25px; border: 3px solid #f93a3d; pointer-events: none; }
.mark-row { top: 0; height: 25px; width: 123px; }
.mark-col { top: -2px; height: 28px; width: 138px; }

.formula { flex: none; height: 22px; margin-top: 3px; display: flex; border-top: 1px solid #9ca4ae; border-bottom: 2px solid #f4f5f7; background: #dfe3e8; font: 13px/18px "Liberation Mono", monospace; color: #111; }
.namebox { width: 160px; background: #fff; display: flex; align-items: center; padding-right: 6px; }
.namebox input { flex: 1; min-width: 0; border: 0; padding: 0 7px 0 0; text-align: center; background: none; }
.fx { width: 59px; justify-content: flex-end; padding-right: 4px; font: 16px "Liberation Serif", serif; border-right: 1px solid #aeb4bc; }
.fx small { font-size: 12px; font-style: italic; }
.expr { flex: 1; min-width: 0; border: 0; padding: 0 12px; background: #fff; }
.expand { width: 16px; justify-content: center; border: 1px solid #b3b9c1; }
.namebox input { padding: 0; margin-right: 8px; }

.sheet { flex: 1; min-height: 0; margin-top: 2px; display: flex; overflow: hidden; background: #fff; }
.grid { position: relative; flex: 1; min-width: 0; overflow: hidden; }
table { border-collapse: separate; border-spacing: 0; table-layout: fixed; width: 1330px; }
.c-head { width: 34px; } .c-col { width: 72px; }
th, td { height: 18px; padding: 2px 0 0; border: 1px solid #d9dadb; border-width: 0 1px 1px 0; text-align: center; white-space: nowrap; line-height: 15px; color: #111; }
td { font-family: "Liberation Serif", "Noto Sans CJK SC", serif; font-size: 15px; font-weight: 400; }
td.num { font-size: 16px; }
th { background: #dfe3e8; border-color: #a9b0b9; font: 16px/15px "Liberation Serif", serif; }
thead th { height: 18px; border-top: 1px solid #a9b0b9; font: 13px/14px "Liberation Mono", monospace; }
.all svg { margin: 2px 0 0 20px; }
th.hot { background: #fdd667; border-color: #c59a3c; }
thead th.hot { background: linear-gradient(#fbd25f, #ffe173); }
.sel { background: #b5d9ff; }
.sel.active { background: #fff; }
.outline { position: absolute; left: 34px; top: 18px; width: 505px; height: 253px; border: 1px solid #000; border-width: 1px 3px 3px 1px; box-shadow: inset 1px 1px #fff; pointer-events: none; }
.outline span { position: absolute; right: -5px; bottom: -5px; width: 7px; height: 7px; background: #000; border: 1px solid #fff; }

.vscroll { width: 16px; flex: none; display: flex; flex-direction: column; background: #dce1e8; border-left: 1px solid #b3b9c1; }
.splitter { height: 8px; margin: 0 0 1px; border: 2px solid #8b929c; background: #fff; }
.vscroll button { height: 16px; justify-content: center; }
.vscroll .end { margin-top: 18px; height: 17px; }
.thumb { border: 1px solid #929aa5; border-radius: 2px; display: flex; align-items: center; justify-content: center; }
.vscroll .thumb { flex: 1; background: linear-gradient(90deg, #f6f8fa, #d8dce2); }
.vscroll .thumb i { width: 8px; height: 7px; background: repeating-linear-gradient(#8b929c 0 1px, #0000 1px 2px); }

.sheetbar { flex: none; height: 16px; display: flex; border-top: 1px solid #8e99a8; background: #dce1e8; font: 12px/12px "Liberation Mono", monospace; }
.nav { width: 63px; display: flex; justify-content: space-around; border-right: 1px solid #8e99a8; padding: 0 2px; }
.leaf { width: 46px; padding-top: 3px; background: #e4e8ed; }
.leaf.front { width: 55px; padding-left: 9px; background: #fff; }
.leaf.fresh { padding: 0 0 0 1px; width: 19px; }
.slash { background: #e4e8ed; }
.hscroll { flex: 0 0 531px; margin-left: auto; display: flex; padding-right: 16px; max-width: 60%; }
.hscroll button { width: 17px; justify-content: center; }
.hsplit { width: 8px; border: 2px solid #9aa1ab; border-width: 1px 2px; background: #fff; }
.track { flex: 1; display: flex; }
.hscroll .thumb { width: 94%; background: linear-gradient(#f3f5f8, #d9dde4); }
.hscroll .thumb i { width: 8px; height: 7px; background: repeating-linear-gradient(90deg, #8b929c 0 1px, #0000 1px 2px); }

.status { position: relative; flex: none; height: 22px; display: flex; align-items: center; background: linear-gradient(#e8eaed, #cfd3d7 40%, #b9bfc5); border-top: 1px solid #8a95a3; }
.state { padding: 0 9px 0 8px; height: 18px; line-height: 17px; border-right: 1px solid #888e95; }
.sums { margin-left: auto; display: flex; gap: 16px; padding-right: 14px; border-right: 1px solid #8f959c; }
.views { display: flex; align-items: center; gap: 4px; padding-left: 1px; }
.views .on { width: 18px; height: 19px; justify-content: center; margin-right: 1px; }
.zoom { margin-left: 12px; margin-right: 9px; }
.status input { appearance: none; width: 102px; height: 14px; margin: 0 1px; background: linear-gradient(#777, #777) center / 100% 1px no-repeat; }
.status input::-webkit-slider-thumb { appearance: none; width: 9px; height: 12px; border: 1px solid #666; border-radius: 2px 2px 5px 5px; background: #f5f5f5; }
.grip { margin: 8px 0 0 8px; }
.credit { position: absolute; right: 5px; top: -3px; font-size: 19px; line-height: 26px; white-space: nowrap; color: #ffffffa0; text-shadow: 1px 1px 1px #555, -1px -1px 1px #8888; pointer-events: none; }
</style>
